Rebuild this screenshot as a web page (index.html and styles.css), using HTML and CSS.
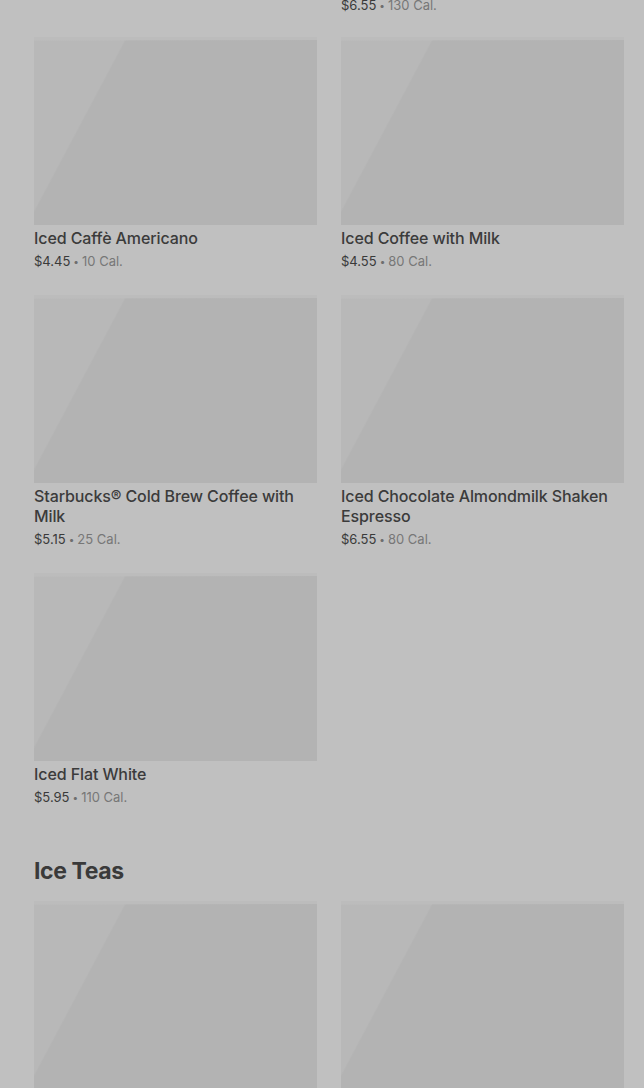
FILE: index.html
```html
<!DOCTYPE html>
<html>
<head>
<meta charset="utf-8">
<link rel="stylesheet" href="styles.css">
</head>
<body>
<main class="page">
  <section class="section">
    <div class="grid grid-tail">
      <div class="item"></div>
      <div class="item">
        <div class="meta"><span class="price">$6.55</span><span class="dot">•</span><span class="cal">130 Cal.</span></div>
      </div>
    </div>
    <div class="grid">
      <div class="item">
        <div class="thumb"></div>
        <div class="title">Iced Caffè Americano</div>
        <div class="meta"><span class="price">$4.45</span><span class="dot">•</span><span class="cal">10 Cal.</span></div>
      </div>
      <div class="item">
        <div class="thumb"></div>
        <div class="title">Iced Coffee with Milk</div>
        <div class="meta"><span class="price">$4.55</span><span class="dot">•</span><span class="cal">80 Cal.</span></div>
      </div>
      <div class="item">
        <div class="thumb"></div>
        <div class="title">Starbucks® Cold Brew Coffee with Milk</div>
        <div class="meta"><span class="price">$5.15</span><span class="dot">•</span><span class="cal">25 Cal.</span></div>
      </div>
      <div class="item">
        <div class="thumb"></div>
        <div class="title">Iced Chocolate Almondmilk Shaken Espresso</div>
        <div class="meta"><span class="price">$6.55</span><span class="dot">•</span><span class="cal">80 Cal.</span></div>
      </div>
      <div class="item">
        <div class="thumb"></div>
        <div class="title">Iced Flat White</div>
        <div class="meta"><span class="price">$5.95</span><span class="dot">•</span><span class="cal">110 Cal.</span></div>
      </div>
    </div>
  </section>
  <section class="section">
    <h2 class="heading">Ice Teas</h2>
    <div class="grid">
      <div class="item"><div class="thumb"></div></div>
      <div class="item"><div class="thumb"></div></div>
    </div>
  </section>
</main>
</body>
</html>
```
FILE: styles.css
```css
html, body {
  margin: 0;
  padding: 0;
  background: #c0c0c0;
  overflow: hidden;
}
body {
  font-family: Inter, "Liberation Sans", sans-serif;
  color: #3a3a3a;
}
.page {
  padding: 0 20px 0 34px;
}
.grid {
  display: grid;
  grid-template-columns: 283px 283px;
  column-gap: 24px;
  row-gap: 24px;
}
.grid-tail {
  margin-top: -8px;
  margin-bottom: 22px;
}
.thumb {
  height: 188px;
  background:
    linear-gradient(90deg, rgba(192,192,192,0.35) 0, rgba(192,192,192,0) 100%) top / 100% 4px no-repeat,
    linear-gradient(118deg, #b8b8b8 0, #b8b8b8 24%, #b3b3b3 24.5%, #b3b3b3 100%);
  box-shadow: inset 0 3px 0 #bcbcbc;
}
.title {
  margin-top: 3px;
  font-size: 16px;
  line-height: 20px;
  font-weight: 500;
  color: #3b3b3b;
  letter-spacing: -0.1px;
}
.meta {
  margin-top: 3px;
  font-size: 13px;
  line-height: 20px;
  display: flex;
  align-items: center;
}
.price {
  color: #3a3a3a;
}
.dot {
  color: #6e6e6e;
  font-size: 10px;
  margin: 0 3px;
}
.cal {
  color: #777777;
}
.section + .section {
  margin-top: 46px;
}
.heading {
  margin: 0 0 12px;
  font-size: 23px;
  line-height: 36px;
  font-weight: 700;
  color: #3a3a3a;
  letter-spacing: -0.4px;
}
```
